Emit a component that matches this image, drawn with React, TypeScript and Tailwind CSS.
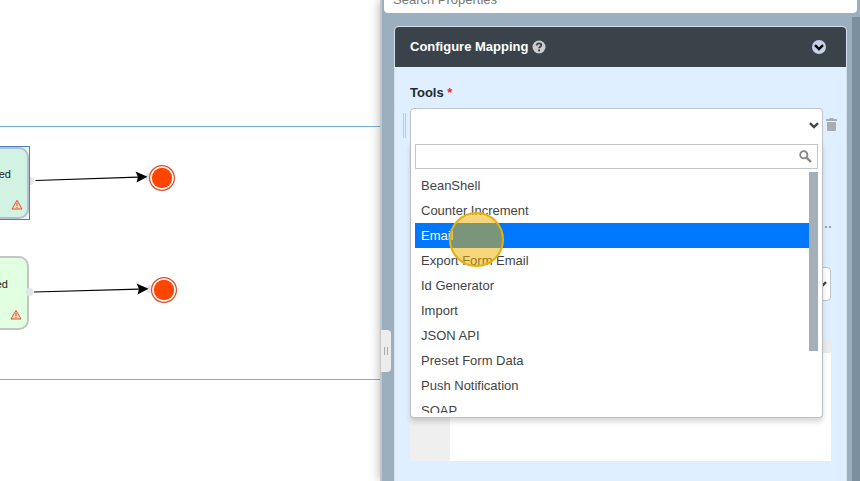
const tools = [
  "BeanShell",
  "Counter Increment",
  "Email",
  "Export Form Email",
  "Id Generator",
  "Import",
  "JSON API",
  "Preset Form Data",
  "Push Notification",
  "SOAP",
];

function Chevron({ className }: { className: string }) {
  return (
    <svg viewBox="0 0 10 7" className={className} fill="none" stroke="currentColor" strokeWidth="2.4" aria-hidden="true">
      <path d="M1 1.2 5 5l4-3.8" />
    </svg>
  );
}

function Help({ className }: { className: string }) {
  return (
    <svg viewBox="0 0 14 14" className={className} role="img" aria-label="Help">
      <circle cx="7" cy="7" r="6.500" fill="#cbcecf" />
      <path d="M4.700 5.500C4.800 4 5.700 3.400 7 3.400c1.400 0 2.300.7 2.300 1.900 0 1.500-2.200 1.500-2.200 3" fill="none" stroke="#3a4349" strokeWidth="1.800" />
      <circle cx="7.100" cy="10.400" r="1.100" fill="#3a4349" />
    </svg>
  );
}

function Warning({ className }: { className: string }) {
  return (
    <svg viewBox="0 0 12 11" className={className} fill="none" stroke="#d9542b" aria-hidden="true">
      <path d="M6 1.3 11 10H1Z" fill="#f6d9c4" />
      <path d="M6 4v3.2M6 8v1" />
    </svg>
  );
}

function Canvas() {
  return (
    <main className="relative min-w-0 flex-1 overflow-hidden bg-white pt-[126px]">
      <section className="relative h-[254px] border-y border-t-[#6fb3dc] border-b-[#7bb6c6]">
        <div className="absolute top-[19px] left-[-70px] h-[74px] w-[100px] border border-[#4a80c6] bg-[#eef4fb]">
          <div className="h-full rounded-[10px] border-2 border-[#b3bfd2] bg-[#d2f2e3]" />
          <span className="absolute top-[19px] right-[18px] text-[11px] leading-4 text-[#222]">ed</span>
          <Warning className="absolute right-[6px] bottom-[9px] h-[11px] w-3" />
        </div>
        <div className="absolute top-[129px] left-[-71px] h-[74px] w-[100px] rounded-[10px] border-2 border-[#c3c4c3] bg-[#e1ffe1]">
          <span className="absolute top-[18px] right-[19px] text-[11px] leading-4 text-[#222]">ed</span>
          <Warning className="absolute right-[5px] bottom-[8px] h-[11px] w-3" />
        </div>
        <svg className="absolute top-0 left-0" width="200" height="252" viewBox="0 127 200 252" aria-hidden="true">
          <g fill="#e6e6ea">
            <path d="M30 177a4 4 0 0 1 0 8z" />
            <circle cx="29.500" cy="292" r="4" />
            <circle cx="149" cy="177" r="4" />
            <circle cx="150" cy="289" r="4" />
          </g>
          <g stroke="#000" strokeWidth="1.200">
            <path d="M35.500 180.500 138 177.200" />
            <path d="M34 292 139 289.200" />
          </g>
          <path d="M135.500 171.500 147.500 176.700 136.500 182.500 138 177Z" />
          <path d="M136.500 283.500 148.500 288.700 137.500 294.500 139 289Z" />
          <g fill="#fff" stroke="#e2471f" strokeWidth="1.200">
            <circle cx="162" cy="178" r="12.400" />
            <circle cx="164" cy="290" r="12.400" />
          </g>
          <g fill="#ff4500">
            <circle cx="162" cy="178" r="10.200" />
            <circle cx="164" cy="290" r="10.200" />
          </g>
        </svg>
      </section>
    </main>
  );
}

function ToolList() {
  return (
    <div className="absolute top-[33px] right-0 left-0 z-10 rounded-b border border-t-0 border-[#b9bfc5] bg-white px-1 pt-[3px] pb-1 shadow-[0_4px_5px_rgba(0,0,0,0.15)]">
      <div className="relative">
        <input
          type="text"
          aria-label="Search tools"
          className="block h-[25px] w-full border border-[#c4c6c8] bg-white px-1 text-[13px] outline-none"
        />
        <svg
          viewBox="0 0 13 13"
          className="absolute top-[6px] right-[6px] size-[13px]"
          fill="none"
          stroke="#858585"
          aria-hidden="true"
        >
          <circle cx="4.800" cy="4.800" r="3.600" strokeWidth="1.800" />
          <path d="M7.800 7.800 12 12" strokeWidth="2.400" />
        </svg>
      </div>
      <div className="mt-[3px] flex h-[241px] items-start overflow-hidden">
        <ul role="listbox" aria-label="Tools" className="min-w-0 flex-1 pt-px">
          {tools.map((tool) => (
            <li
              key={tool}
              role="option"
              aria-selected={tool === "Email"}
              className={
                tool === "Email"
                  ? "relative z-10 h-[25px] bg-[#0077ff] px-[6px] leading-[25px] text-white"
                  : "h-[25px] px-[6px] leading-[25px] text-[#444]"
              }
            >
              {tool}
              {tool === "Email" && (
                <span className="absolute top-[-11px] left-[34px] size-[55px] rounded-full border-2 border-[#e8b00a] bg-[#ebb000]/52" />
              )}
            </li>
          ))}
        </ul>
        <div className="-mr-px h-[179px] w-[10px] bg-[#a3b0b9]" />
      </div>
    </div>
  );
}

function MappingCard() {
  return (
    <section className="flex min-h-0 flex-1 flex-col rounded-t-[5px] border border-b-0 border-[#d3e0eb] bg-[#e0efff]">
      <header className="flex h-10 shrink-0 items-center rounded-t bg-[#3a4349] pr-5 pl-[15px] font-bold text-white">
        <h2 className="leading-[18px]">Configure Mapping</h2>
        <Help className="ml-1 size-[14px]" />
        <button
          type="button"
          aria-label="Collapse section"
          className="ml-auto flex size-[14px] items-center justify-center rounded-full bg-[#c3d3e5] text-black"
        >
          <Chevron className="h-[7px] w-[10px]" />
        </button>
      </header>
      <div className="px-[15px] pt-[17px]">
        <label htmlFor="tools" className="block leading-[18px] font-bold text-[#1d2a33]">
          Tools <span className="text-[#f02a1d]">*</span>
        </label>
        <div className="-mr-[6px] -ml-[7px] mt-[6px] flex items-center">
          <div className="mr-1 h-[25px] w-[3px] border-x border-[#c3ccd5]" />
          <div className="relative min-w-0 flex-1">
            <select
              id="tools"
              className="block h-[34px] w-full appearance-none rounded-t border border-[#bcc3ca] bg-white px-2 outline-none"
            >
              <option value="" />
              {tools.map((tool) => (
                <option key={tool}>{tool}</option>
              ))}
            </select>
            <Chevron className="pointer-events-none absolute top-[14px] right-1 h-[7px] w-[10px] text-[#444]" />
            <ToolList />
          </div>
          <button type="button" aria-label="Remove tool" className="mb-[2px] ml-[3px] w-[11px]">
            <svg viewBox="0 0 11 13" className="block h-[13px] w-[11px]" fill="#a6adb5" aria-hidden="true">
              <path d="M3.500 0h4v1H11v2H0V1h3.500zM1 4h9v8a1 1 0 0 1-1 1H2a1 1 0 0 1-1-1z" />
            </svg>
          </button>
        </div>
        <div className="mt-[84px] flex h-[3px] justify-end gap-[2px]">
          <span className="size-[2px] bg-[#94a3b0]" />
          <span className="size-[2px] bg-[#94a3b0]" />
        </div>
        <div className="relative mt-[38px]">
          <select
            aria-label="Run mode"
            className="block h-[34px] w-full appearance-none rounded border border-[#bcc3ca] bg-white px-2"
          />
          <Chevron className="pointer-events-none absolute top-[14px] right-1 h-[7px] w-[10px] text-[#444]" />
        </div>
        <div className="mt-[39px] h-[121px] border-t-[13px] border-[#ebebeb] bg-white">
          <div className="h-full w-10 bg-[#efefef]" />
        </div>
      </div>
    </section>
  );
}

export default function App() {
  return (
    <div className="flex h-screen overflow-hidden bg-white font-['Liberation_Sans',Arial,sans-serif] text-[13px]">
      <Canvas />
      <aside className="relative flex w-[480px] shrink-0 flex-col border-l-2 border-[#c4c6c8] bg-[#9bafbe] shadow-[0_0_10px_rgba(0,0,0,0.3)]">
        <input
          type="search"
          aria-label="Search Properties"
          placeholder="Search Properties"
          className="-mt-[14px] mr-[3px] ml-[2px] h-[27px] shrink-0 rounded bg-white px-[9px] text-[13px] outline-none placeholder:text-[#777]"
        />
        <div className="flex min-h-0 flex-1">
          <div className="flex min-w-0 flex-1 flex-col overflow-hidden pt-[13px] pr-[5px] pl-3">
            <MappingCard />
          </div>
          <div className="mt-1 w-2 bg-[#7c8f9e]" />
        </div>
        <div className="absolute top-[330px] -left-px flex h-[42px] w-[10px] items-center justify-center rounded-r-sm bg-[#ececec]">
          <div className="h-2 w-1 border-x border-[#aaa]" />
        </div>
      </aside>
    </div>
  );
}
